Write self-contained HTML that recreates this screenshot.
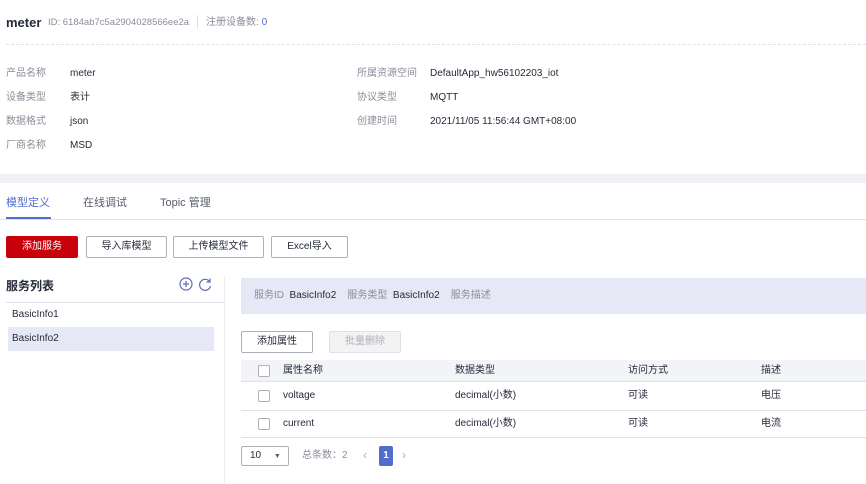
<!DOCTYPE html><html><head><meta charset="utf-8"><style>
*{margin:0;padding:0;box-sizing:border-box}
body{width:866px;height:484px;background:#fff;font-family:"Liberation Sans","Noto Sans CJK SC",sans-serif;font-size:10px;line-height:12px;color:#252b3a;position:relative;overflow:hidden}
.a{position:absolute;white-space:nowrap;line-height:12px}
.g{color:#8a8e99}
.btn{position:absolute;height:22px;border:1px solid #adb0b8;border-radius:2px;background:#fff;font-size:10px;text-align:center;line-height:20px;color:#252b3a}
.cb{position:absolute;width:12px;height:12px;border:1px solid #adb0b8;border-radius:2px;background:#fff}
</style></head><body>
<div class="a" style="left:6px;top:15px;font-size:13px;line-height:15px;font-weight:bold">meter</div>
<div class="a g" style="left:48px;top:17px;font-size:9.5px">ID: 6184ab7c5a2904028566ee2a</div>
<div class="a" style="left:197px;top:15px;width:1px;height:14px;background:#dfe1e6"></div>
<div class="a g" style="left:206px;top:17px">注册设备数: <span style="color:#526ecc">0</span></div>
<div class="a" style="left:6px;top:44px;width:860px;border-top:1px dashed #dfe1e6"></div>
<div class="a g" style="left:6px;top:68px">产品名称</div><div class="a" style="left:70px;top:68px">meter</div>
<div class="a g" style="left:6px;top:92px">设备类型</div><div class="a" style="left:70px;top:92px">表计</div>
<div class="a g" style="left:6px;top:116px">数据格式</div><div class="a" style="left:70px;top:116px">json</div>
<div class="a g" style="left:6px;top:140px">厂商名称</div><div class="a" style="left:70px;top:140px">MSD</div>
<div class="a g" style="left:357px;top:68px">所属资源空间</div><div class="a" style="left:430px;top:68px">DefaultApp_hw56102203_iot</div>
<div class="a g" style="left:357px;top:92px">协议类型</div><div class="a" style="left:430px;top:92px">MQTT</div>
<div class="a g" style="left:357px;top:116px">创建时间</div><div class="a" style="left:430px;top:116px">2021/11/05 11:56:44 GMT+08:00</div>
<div class="a" style="left:0;top:174px;width:866px;height:9px;background:#f0f1f4"></div>
<div class="a" style="left:6px;top:196px;font-size:11px;line-height:14px;color:#526ecc">模型定义</div>
<div class="a" style="left:83px;top:196px;font-size:11px;line-height:14px;color:#575d6c">在线调试</div>
<div class="a" style="left:160px;top:196px;font-size:11px;line-height:14px;color:#575d6c">Topic 管理</div>
<div class="a" style="left:0;top:219px;width:866px;height:1px;background:#dfe1e6"></div>
<div class="a" style="left:6px;top:217px;width:45px;height:2px;background:#526ecc"></div>
<div class="btn" style="left:6px;top:236px;width:72px;background:#c7000b;border-color:#c7000b;color:#fff">添加服务</div>
<div class="btn" style="left:86px;top:236px;width:81px">导入库模型</div>
<div class="btn" style="left:173px;top:236px;width:91px">上传模型文件</div>
<div class="btn" style="left:271px;top:236px;width:77px">Excel导入</div>
<div class="a" style="left:6px;top:279px;font-size:12px;line-height:15px;font-weight:bold">服务列表</div>
<svg class="a" style="left:178px;top:276px" width="36" height="16" viewBox="0 0 36 16" fill="none" stroke="#5e6bb7" stroke-width="1.2"><circle cx="8" cy="8" r="6"/><path d="M8 5v6M5 8h6"/><path d="M31.5 5.5A5.5 5.5 0 1 0 32.5 10"/><path d="M32 2.5v3.5h-3.5"/></svg>
<div class="a" style="left:6px;top:302px;width:218px;height:1px;background:#dfe1e6"></div>
<div class="a" style="left:224px;top:276px;width:1px;height:208px;background:#eceef2"></div>
<div class="a" style="left:12px;top:309px">BasicInfo1</div>
<div class="a" style="left:8px;top:327px;width:206px;height:24px;background:#e6e9f5"></div>
<div class="a" style="left:12px;top:333px">BasicInfo2</div>
<div class="a" style="left:241px;top:278px;width:625px;height:36px;background:#e6e9f5"></div>
<div class="a" style="left:254px;top:290px"><span class="g">服务ID</span>&nbsp; BasicInfo2 &nbsp;&nbsp;&nbsp;<span class="g">服务类型</span>&nbsp; BasicInfo2 &nbsp;&nbsp;&nbsp;<span class="g">服务描述</span></div>
<div class="btn" style="left:241px;top:331px;width:72px">添加属性</div>
<div class="btn" style="left:329px;top:331px;width:72px;background:#f3f3f3;border-color:#dfe1e6;color:#adb0b8">批量删除</div>
<div class="a" style="left:241px;top:360px;width:625px;height:22px;background:#f3f4f8;border-bottom:1px solid #dfe1e6"></div>
<div class="cb" style="left:258px;top:365px"></div>
<div class="a" style="left:283px;top:365px">属性名称</div><div class="a" style="left:455px;top:365px">数据类型</div><div class="a" style="left:628px;top:365px">访问方式</div><div class="a" style="left:761px;top:365px">描述</div>
<div class="cb" style="left:258px;top:390px"></div>
<div class="a" style="left:283px;top:390px">voltage</div><div class="a" style="left:455px;top:390px">decimal(小数)</div><div class="a" style="left:628px;top:390px">可读</div><div class="a" style="left:761px;top:390px">电压</div>
<div class="a" style="left:241px;top:410px;width:625px;height:1px;background:#dfe1e6"></div>
<div class="cb" style="left:258px;top:418px"></div>
<div class="a" style="left:283px;top:418px">current</div><div class="a" style="left:455px;top:418px">decimal(小数)</div><div class="a" style="left:628px;top:418px">可读</div><div class="a" style="left:761px;top:418px">电流</div>
<div class="a" style="left:241px;top:437px;width:625px;height:1px;background:#dfe1e6"></div>
<div class="btn" style="left:241px;top:446px;width:48px;height:20px;line-height:18px;text-align:left;padding-left:8px">10 <span style="font-size:7px;margin-left:10px;color:#575d6c">▼</span></div>
<div class="a g" style="left:302px;top:450px">总条数：2</div>
<div class="a" style="left:363px;top:449px;font-size:12px;color:#adb0b8">‹</div>
<div class="a" style="left:379px;top:446px;width:14px;height:20px;background:#526ecc;color:#fff;border-radius:2px;text-align:center;line-height:20px;font-weight:bold">1</div>
<div class="a" style="left:402px;top:449px;font-size:12px;color:#adb0b8">›</div>
</body></html>
